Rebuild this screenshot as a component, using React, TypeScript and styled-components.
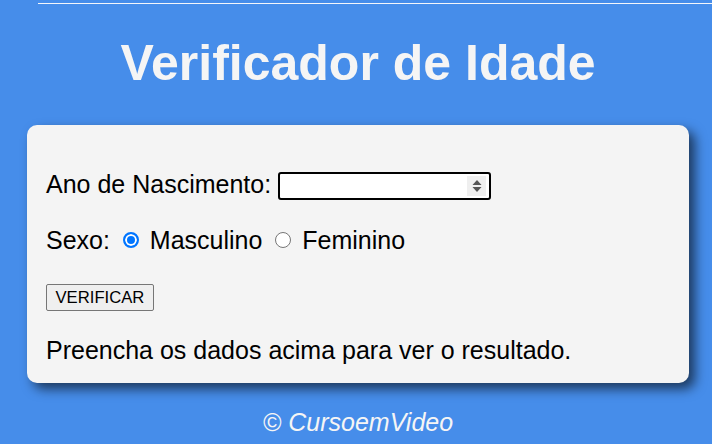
import React, { ReactElement, useState } from 'react';
import styled, { createGlobalStyle } from 'styled-components';

const GlobalStyle = createGlobalStyle`
  html, body {
    margin: 0;
    padding: 0;
    overflow: hidden;
    background: #468dea;
  }
  body {
    width: 716px;
    font-family: "Liberation Sans", Arial, sans-serif;
  }
`;

const Page = styled.div`
  display: flex;
  flex-direction: column;
  align-items: center;
  min-height: 444px;
`;

const TopRule = styled.div`
  align-self: stretch;
  height: 1px;
  margin: 3px 0 0 38px;
  background: #f4f6fb;
`;

const Title = styled.h1`
  margin: 30px 0 33px;
  font-size: 50px;
  font-weight: bold;
  color: #f5f5f5;
  text-align: center;
`;

const Card = styled.section`
  box-sizing: border-box;
  width: 662px;
  display: flex;
  flex-direction: column;
  align-items: flex-start;
  padding: 45px 19px 18px;
  background: #f4f4f4;
  border-radius: 10px;
  box-shadow: 6px 6px 12px rgba(0, 0, 0, 0.6);
`;

const Row = styled.div<{ $gap?: number }>`
  margin-top: ${(p) => p.$gap ?? 0}px;
  font-size: 25px;
  color: #000;
  white-space: nowrap;
`;

const ButtonRow = styled.div<{ $gap?: number }>`
  display: flex;
  margin-top: ${(p) => p.$gap ?? 0}px;
`;

const NumberBox = styled.span`
  box-sizing: border-box;
  display: inline-flex;
  align-items: center;
  width: 213px;
  height: 28px;
  vertical-align: middle;
  border: 2px solid #000;
  border-radius: 3px;
  background: #fff;
`;

const NumberInput = styled.input`
  flex: 1;
  min-width: 0;
  height: 100%;
  padding: 0 4px;
  border: none;
  outline: none;
  background: transparent;
  font: 16px "Liberation Sans", Arial, sans-serif;
  -moz-appearance: textfield;
  &::-webkit-inner-spin-button,
  &::-webkit-outer-spin-button {
    -webkit-appearance: none;
    margin: 0;
  }
`;

const Spinner = styled.span`
  display: flex;
  align-items: center;
  justify-content: center;
  width: 19px;
  height: 20px;
  margin-right: 3px;
  background: #efefef;
`;

const Radio = styled.input`
  appearance: none;
  -webkit-appearance: none;
  box-sizing: border-box;
  display: inline-block;
  width: 16px;
  height: 16px;
  margin: 0 4px 0 6px;
  vertical-align: 1px;
  border: 1px solid #767676;
  border-radius: 50%;
  background: #fff;
  cursor: pointer;
  &:checked {
    border: 2px solid #0075ff;
    background: #0075ff;
    box-shadow: inset 0 0 0 2px #fff;
  }
`;

const Button = styled.button`
  box-sizing: border-box;
  height: 27px;
  padding: 0 8.5px;
  border: 1px solid #767676;
  border-radius: 2px;
  background: #efefef;
  color: #000;
  font: 16.67px "Liberation Sans", Arial, sans-serif;
  cursor: pointer;
`;

const Footer = styled.footer`
  margin-top: 25px;
  font-size: 25px;
  font-style: italic;
  color: #f5f5f5;
`;

export default function App(): ReactElement {
  const [sexo, setSexo] = useState('m');
  const [ano, setAno] = useState('');

  return (
    <>
      <GlobalStyle />
      <Page>
        <TopRule />
        <Title>Verificador de Idade</Title>
        <Card>
          <Row>
            Ano de Nascimento:{' '}
            <NumberBox>
              <NumberInput type="number" value={ano} onChange={(e) => setAno(e.target.value)} />
              <Spinner>
                <svg width="10" height="14" viewBox="0 0 10 14">
                  <path d="M5 1 L9.5 6 L0.5 6 Z" fill="#555" />
                  <path d="M0.5 8 L9.5 8 L5 13 Z" fill="#555" />
                </svg>
              </Spinner>
            </NumberBox>
          </Row>
          <Row $gap={26}>
            Sexo:{' '}
            <Radio type="radio" name="sexo" checked={sexo === 'm'} onChange={() => setSexo('m')} />{' '}
            Masculino{' '}
            <Radio type="radio" name="sexo" checked={sexo === 'f'} onChange={() => setSexo('f')} />{' '}
            Feminino
          </Row>
          <ButtonRow $gap={29}>
            <Button>VERIFICAR</Button>
          </ButtonRow>
          <Row $gap={25}>Preencha os dados acima para ver o resultado.</Row>
        </Card>
        <Footer>© CursoemVideo</Footer>
      </Page>
    </>
  );
}
